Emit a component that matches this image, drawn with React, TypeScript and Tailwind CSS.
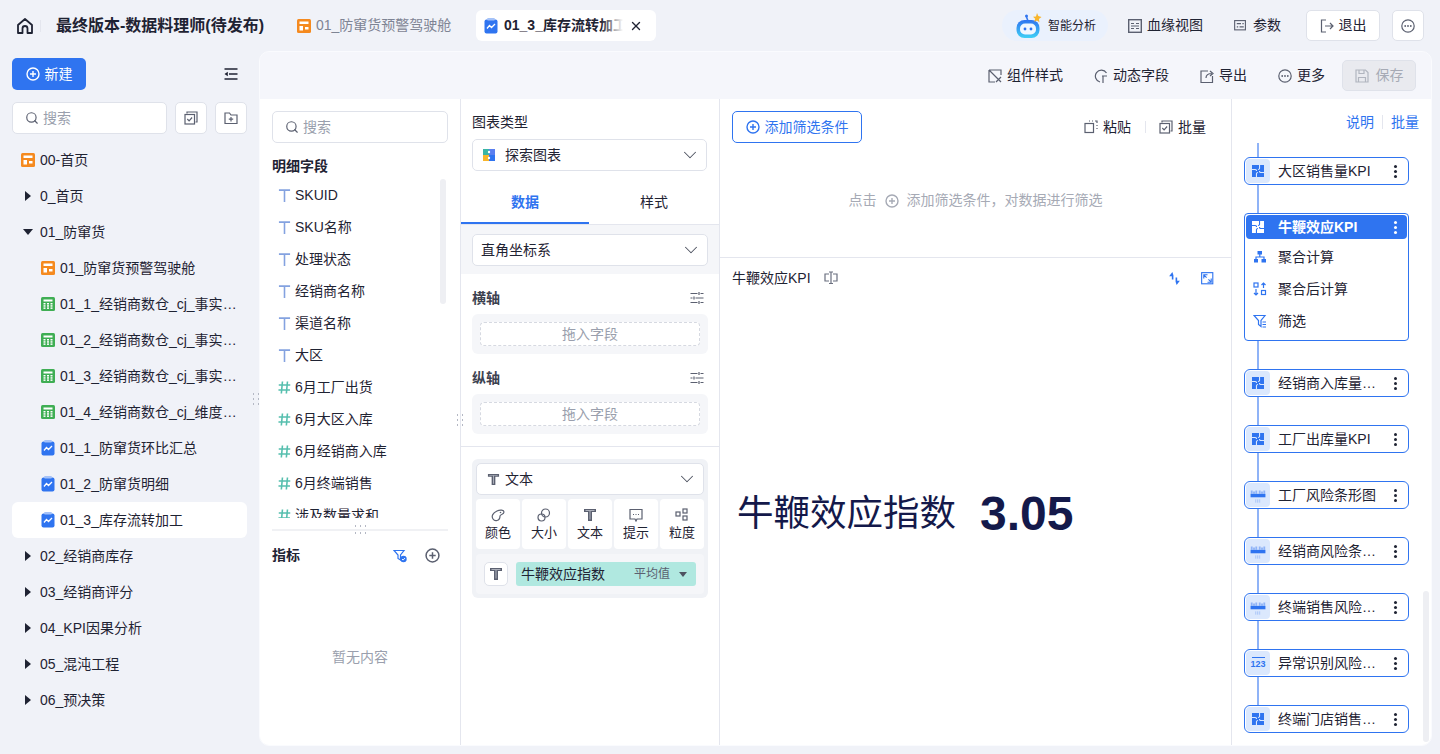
import React from "react";
import { ChevronDown, Search, X } from "lucide-react";

const BLUE = "#2f74f0";

function Svg({ size = 14, children, className = "" }: { size?: number; children: React.ReactNode; className?: string }) {
  return (
    <svg width={size} height={size} viewBox="0 0 14 14" fill="none" className={`shrink-0 ${className}`}>
      {children}
    </svg>
  );
}

const stroke = { stroke: "currentColor", strokeWidth: 1.2 };

function HomeIcon() {
  return (
    <svg width="18" height="18" viewBox="0 0 18 18" fill="none" className="text-[#1f2333]">
      <path d="M2 8 9 2l7 6v8h-4.500v-4.500a2.500 2.500 0 0 0-5 0V16H2z" stroke="currentColor" strokeWidth="1.8" strokeLinejoin="round" />
    </svg>
  );
}

function DashIcon({ size = 14 }: { size?: number }) {
  return (
    <Svg size={size}>
      <rect width="14" height="14" rx="1.500" fill="#f58a1f" />
      <rect x="2.500" y="2.500" width="9" height="2.500" fill="#fff" />
      <rect x="2.500" y="7" width="3.500" height="4.500" fill="#fff" />
      <rect x="8" y="8" width="3.500" height="2.500" fill="#fff" />
    </Svg>
  );
}

function TableIcon() {
  return (
    <Svg>
      <rect width="14" height="14" rx="1.500" fill="#3fae54" />
      <rect x="2.500" y="2.500" width="9" height="2" fill="#fff" />
      {[2.5, 6, 9.5].map((x) =>
        [6, 8.2, 10.4].map((y) => <rect key={`${x}-${y}`} x={x} y={y} width="2" height="1.500" fill="#fff" />)
      )}
    </Svg>
  );
}

function ReportIcon() {
  return (
    <svg width="14" height="16" viewBox="0 0 14 16" fill="none" className="shrink-0">
      <rect x="0.500" y="1.500" width="13" height="14" rx="2" fill={BLUE} />
      <rect x="3" y="0" width="8" height="2.500" rx="1.200" fill="#a5c2f8" />
      <path d="m3 10.500 2.500-3 2 2L11 6" stroke="#fff" strokeWidth="1.300" />
    </svg>
  );
}

function CheckBoxIcon() {
  return (
    <Svg className="text-[#5b6070]">
      <path d="M3 2.500V1h10v10h-1.500" {...stroke} />
      <rect x="1" y="3.500" width="9.500" height="9.500" {...stroke} />
      <path d="m3.300 8 1.800 1.900 3-3.400" {...stroke} />
    </Svg>
  );
}

function FolderPlusIcon() {
  return (
    <Svg className="text-[#5b6070]">
      <path d="M1 2h4.500l1.500 2h6v8.500H1z" {...stroke} />
      <path d="M7 6v4.500M4.800 8.200h4.400" {...stroke} />
    </Svg>
  );
}

function PlusCircle({ size = 14, className = "" }: { size?: number; className?: string }) {
  return (
    <Svg size={size} className={className}>
      <circle cx="7" cy="7" r="6" stroke="currentColor" strokeWidth="1.400" />
      <path d="M7 4v6M4 7h6" stroke="currentColor" strokeWidth="1.400" />
    </Svg>
  );
}

function TIcon() {
  return (
    <Svg size={13} className="text-[#84a2e0]">
      <path d="M1 1.200h12M7 1.200V14" stroke="currentColor" strokeWidth="1.700" />
    </Svg>
  );
}

function HashIcon() {
  return (
    <Svg size={13} className="text-[#56bfae]">
      <path d="M4.800 0.500 3.600 13.500M10.200 0.500 9 13.500M0.800 4.300h12.400M0.500 9.700h12.400" stroke="currentColor" strokeWidth="1.700" />
    </Svg>
  );
}

function BoldT({ size = 13 }: { size?: number }) {
  return (
    <Svg size={size}>
      <path d="M1 1h12v3H1zM5 3h4v10H5z" fill="#5b6070" />
      <path d="M2.500 2.300h9v0.700h-9zM6.600 3h0.800v8.500h-0.800z" fill="#c6c9d2" />
    </Svg>
  );
}

function SlidersIcon() {
  return (
    <Svg className="text-[#5b6070]">
      <path d="M0.500 2.500h7M10.500 2.500h3M0.500 7h2M5.500 7h8M0.500 11.500h7M10.500 11.500h3M9 1v3M4 5.500v3M9 10v3" {...stroke} />
    </Svg>
  );
}

function PuzzleIcon({ white = false }: { white?: boolean }) {
  const c = white ? "#fff" : BLUE;
  const bg = white ? BLUE : "#dbe8fd";
  return (
    <Svg size={12}>
      <rect width="14" height="14" fill={c} />
      <path
        d="M8.800 0v3.700a1.500 1.500 0 0 1-1.800 1.500M0 5.200h3.700a1.500 1.500 0 0 1 1.500 1.800M14 8.800h-3.700a1.500 1.500 0 0 1-1.500-1.800M5.200 14v-3.700a1.500 1.500 0 0 1 1.800-1.500"
        stroke={bg}
        strokeWidth="1.300"
      />
    </Svg>
  );
}

function BarTagIcon() {
  return (
    <Svg size={16}>
      <path d="M1.500 3v3M3.500 4v2M5.500 3v3M8.500 3v3M10.500 4v2M12.500 3v3" stroke="#8fb3f7" strokeWidth="1.600" />
      <rect x="0.500" y="6" width="13" height="3" fill={BLUE} />
      <path d="M4.500 11.500h5M4.500 13h5" stroke="#a5c2f8" strokeWidth="1" strokeDasharray="1 0.600" />
    </Svg>
  );
}

function NumberIcon() {
  return (
    <div className="flex flex-col items-center">
      <div className="h-px w-[13px] bg-[#2f74f0]" />
      <span className="mt-[2px] text-[9px] font-bold leading-[9px] text-[#2f74f0]">123</span>
    </div>
  );
}

function Kebab({ white = false }: { white?: boolean }) {
  const c = white ? "bg-white" : "bg-[#1f2333]";
  return (
    <div className="flex h-[13px] flex-col justify-between">
      <span className={`h-[3px] w-[3px] rounded-full ${c}`} />
      <span className={`h-[3px] w-[3px] rounded-full ${c}`} />
      <span className={`h-[3px] w-[3px] rounded-full ${c}`} />
    </div>
  );
}

function Grip({ className, wide = false }: { className: string; wide?: boolean }) {
  return (
    <div className={`absolute grid ${wide ? "grid-cols-3 gap-x-[4px] gap-y-[5px]" : "grid-cols-2 gap-x-[4px] gap-y-[3px]"} ${className}`}>
      {[0, 1, 2, 3, 4, 5].map((i) => (
        <span key={i} className="h-[2px] w-[1px] bg-[#b4b8c4]" />
      ))}
    </div>
  );
}

function RobotLogo() {
  return (
    <svg width="28" height="28" viewBox="0 0 28 28" fill="none" className="shrink-0">
      <defs>
        <linearGradient id="robotHead" x1="0" y1="0" x2="0" y2="1">
          <stop offset="0" stopColor="#2f74f0" />
          <stop offset="1" stopColor="#3fd0f5" />
        </linearGradient>
      </defs>
      <path d="M13 9 11.500 5" stroke="#2f74f0" strokeWidth="1.500" />
      <circle cx="11.500" cy="4" r="1.500" fill="#2f74f0" />
      <rect x="1.500" y="8" width="23" height="18" rx="8" fill="url(#robotHead)" />
      <rect x="5" y="11.500" width="16" height="11" rx="5" fill="#f0f7ff" />
      <circle cx="10" cy="17" r="1.400" fill="#2f74f0" />
      <circle cx="16" cy="17" r="1.400" fill="#2f74f0" />
      <path d="m22 1 1.300 3 3.200 1-2.600 2 .5 3.200-2.400-1.800-2.700 1.300.9-3L18 4.800l3-.2z" fill="#f8b52c" />
    </svg>
  );
}

function TopBar() {
  return (
    <div className="flex h-[51px] shrink-0 items-center pl-[16px] pr-[16px]">
      <HomeIcon />
      <div className="ml-[6px] h-[12px] w-px bg-[#e4e6ee]" />
      <div className="ml-[15px] w-[241px] shrink-0 text-[16px] font-bold text-[#1f2333]">最终版本-数据料理师(待发布)</div>
      <div className="flex w-[179px] shrink-0 items-center gap-[5px] text-[14px] text-[#7e8494]">
        <DashIcon />
        <span>01_防窜货预警驾驶舱</span>
      </div>
      <div className="flex h-[31px] w-[180px] shrink-0 items-center rounded-[6px] bg-white pl-[8px] text-[14px] font-bold text-[#1f2333]">
        <ReportIcon />
        <span className="relative ml-[6px] w-[119px] overflow-hidden whitespace-nowrap">
          01_3_库存流转加工
          <span className="absolute inset-y-0 right-0 w-[22px] bg-gradient-to-r from-transparent to-white" />
        </span>
        <X size={14} strokeWidth={2.4} className="ml-[6px] text-[#1f2333]" />
      </div>

      <div className="ml-auto flex items-center">
        <div className="flex h-[31px] w-[106px] items-center rounded-full bg-[#eaf1fd] pl-[13px] text-[12px] text-[#1f2333]">
          <RobotLogo />
          <span className="ml-[5px]">智能分析</span>
        </div>
        <div className="ml-[20px] flex items-center gap-[5px] text-[14px] text-[#1f2333]">
          <Svg className="text-[#5b6070]">
            <rect x="0.700" y="0.700" width="12.600" height="12.600" stroke="currentColor" strokeWidth="1.400" />
            <path d="M3 4.500h3M3 9.500h3M8 4.500h3M8 9.500h3M3 7h8" {...stroke} />
          </Svg>
          <span>血缘视图</span>
        </div>
        <div className="ml-[31px] flex items-center gap-[6px] text-[14px] text-[#1f2333]">
          <Svg size={13} className="text-[#5b6070]">
            <rect x="0.700" y="1.700" width="11.600" height="10" {...stroke} />
            <path d="M3 5h4.500M9 5h1.500M3 8.500h1.500M6 8.500h4.500" {...stroke} />
          </Svg>
          <span>参数</span>
        </div>
        <button className="ml-[25px] flex h-[31px] w-[74px] items-center justify-center gap-[5px] rounded-[5px] border border-[#dfe2ea] bg-white text-[14px] text-[#1f2333]">
          <Svg className="text-[#5b6070]">
            <path d="M6 1H1.500v12H6M5 7h8M10 4l3 3-3 3" {...stroke} />
          </Svg>
          退出
        </button>
        <button className="ml-[12px] flex h-[31px] w-[32px] items-center justify-center rounded-[5px] border border-[#dfe2ea] bg-white">
          <EllipsisCircle />
        </button>
      </div>
    </div>
  );
}

function EllipsisCircle() {
  return (
    <Svg className="text-[#5b6070]">
      <circle cx="7" cy="7" r="6.200" {...stroke} />
      <circle cx="4.200" cy="7" r="0.900" fill="currentColor" />
      <circle cx="7" cy="7" r="0.900" fill="currentColor" />
      <circle cx="9.800" cy="7" r="0.900" fill="currentColor" />
    </Svg>
  );
}

type TreeRow = { label: string; icon?: "dash" | "table" | "report"; caret?: "right" | "down"; indent?: boolean; active?: boolean };

const TREE: TreeRow[] = [
  { label: "00-首页", icon: "dash" },
  { label: "0_首页", caret: "right" },
  { label: "01_防窜货", caret: "down" },
  { label: "01_防窜货预警驾驶舱", icon: "dash", indent: true },
  { label: "01_1_经销商数仓_cj_事实表一二三", icon: "table", indent: true },
  { label: "01_2_经销商数仓_cj_事实表一二三", icon: "table", indent: true },
  { label: "01_3_经销商数仓_cj_事实表一二三", icon: "table", indent: true },
  { label: "01_4_经销商数仓_cj_维度表一二三", icon: "table", indent: true },
  { label: "01_1_防窜货环比汇总", icon: "report", indent: true },
  { label: "01_2_防窜货明细", icon: "report", indent: true },
  { label: "01_3_库存流转加工", icon: "report", indent: true, active: true },
  { label: "02_经销商库存", caret: "right" },
  { label: "03_经销商评分", caret: "right" },
  { label: "04_KPI因果分析", caret: "right" },
  { label: "05_混沌工程", caret: "right" },
  { label: "06_预决策", caret: "right" },
];

function Sidebar() {
  return (
    <aside className="relative w-[259px] shrink-0 pl-[12px] pr-[12px] pt-[7px]">
      <div className="flex items-center justify-between">
        <button className="flex h-[32px] w-[74px] items-center justify-center gap-[5px] rounded-[5px] bg-[#2f74f0] text-[14px] text-white">
          <PlusCircle />
          新建
        </button>
        <Svg className="mr-[9px] text-[#1f2333]">
          <path d="M0.500 2h13M5 7h8.500M0.500 12h13" stroke="currentColor" strokeWidth="1.500" />
          <path d="M3.800 4.800v4.400L0.500 7z" fill="currentColor" />
        </Svg>
      </div>
      <div className="mt-[12px] flex gap-[8px]">
        <div className="flex h-[32px] w-[155px] items-center gap-[4px] rounded-[5px] border border-[#dfe2ea] bg-white pl-[12px] text-[14px] text-[#9a9fad]">
          <Search size={14} className="text-[#5b6070]" />
          搜索
        </div>
        <div className="flex h-[32px] w-[32px] items-center justify-center rounded-[5px] border border-[#dfe2ea] bg-white">
          <CheckBoxIcon />
        </div>
        <div className="flex h-[32px] w-[32px] items-center justify-center rounded-[5px] border border-[#dfe2ea] bg-white">
          <FolderPlusIcon />
        </div>
      </div>
      <div className="mt-[8px]">
        {TREE.map((row) => (
          <div
            key={row.label}
            className={`flex h-[36px] items-center text-[14px] text-[#1f2333] ${row.active ? "rounded-[6px] bg-white" : ""} ${
              row.indent ? "pl-[29px]" : "pl-[9px]"
            }`}
          >
            {row.caret === "right" && <span className="ml-[4px] mr-[9px] h-0 w-0 border-y-[5px] border-l-[6px] border-y-transparent border-l-[#1f2333]" />}
            {row.caret === "down" && <span className="ml-[2px] mr-[7px] h-0 w-0 border-x-[5px] border-t-[6px] border-x-transparent border-t-[#1f2333]" />}
            {row.icon === "dash" && <DashIcon />}
            {row.icon === "table" && <TableIcon />}
            {row.icon === "report" && <ReportIcon />}
            <span className={`w-[178px] truncate ${row.icon ? "ml-[5px]" : ""}`}>{row.label}</span>
          </div>
        ))}
      </div>
      <Grip className="right-0 top-[342px]" />
    </aside>
  );
}

function Toolbar() {
  const item = "flex items-center gap-[5px] text-[14px] text-[#1f2333]";
  return (
    <div className="flex h-[47px] shrink-0 items-center justify-end gap-[31px] pr-[15px]">
      <div className={item}>
        <Svg className="text-[#5b6070]">
          <path d="M1 1h12v5M1 1v12h6M1 1l12 12M8 13l5-5" {...stroke} />
        </Svg>
        组件样式
      </div>
      <div className={item}>
        <Svg className="text-[#5b6070]">
          <path d="M12.500 4A6 6 0 1 0 6 13M8 7h5M9 7v7" {...stroke} />
        </Svg>
        动态字段
      </div>
      <div className={item}>
        <Svg className="text-[#5b6070]">
          <path d="M8 2H1v11.500h11.500V7M6 9c0-3 2-4.500 6-4.500M10 2l3 2.500-3 2.500" {...stroke} />
        </Svg>
        导出
      </div>
      <div className={item}>
        <EllipsisCircle />
        更多
      </div>
      <button className="-ml-[14px] flex h-[31px] w-[74px] items-center justify-center gap-[7px] rounded-[5px] border border-[#dfe2ea] bg-[#e9eaef] text-[14px] text-[#a6aab5]">
        <Svg className="text-[#b1b5bf]">
          <path d="M1 1h9.500L13 3.500V13H1zM4 1v3.500h5V1M3.500 13V8.500h7V13" {...stroke} />
        </Svg>
        保存
      </button>
    </div>
  );
}

const FIELDS_TEXT = ["SKUID", "SKU名称", "处理状态", "经销商名称", "渠道名称", "大区"];
const FIELDS_NUM = ["6月工厂出货", "6月大区入库", "6月经销商入库", "6月终端销售", "涉及数量求和"];

function FieldColumn() {
  return (
    <div className="relative flex w-[201px] shrink-0 flex-col border-r border-[#e4e6ee]">
      <div className="px-[12px] pt-[12px]">
        <div className="flex h-[32px] items-center gap-[4px] rounded-[5px] border border-[#dfe2ea] pl-[12px] text-[14px] text-[#9a9fad]">
          <Search size={14} className="text-[#5b6070]" />
          搜索
        </div>
      </div>
      <div className="relative mb-[11px] h-[375px] overflow-hidden">
        <div className="px-[12px] pt-[14px] text-[14px] font-bold leading-[18px] text-[#1f2333]">明细字段</div>
        <div className="mt-[4px] pl-[18px]">
          {FIELDS_TEXT.map((f) => (
            <div key={f} className="flex h-[32px] items-center gap-[4px] text-[14px] text-[#1f2333]">
              <TIcon />
              {f}
            </div>
          ))}
          {FIELDS_NUM.map((f) => (
            <div key={f} className="flex h-[32px] items-center gap-[4px] text-[14px] text-[#1f2333]">
              <HashIcon />
              {f}
            </div>
          ))}
        </div>
        <div className="absolute left-[180px] top-[36px] h-[125px] w-[6px] rounded-full bg-[#eeeff3]" />
      </div>
      <div className="mx-[12px] h-[2px] bg-[#f0f1f4]" />
      <div className="flex items-center justify-between px-[12px] pr-[20px] pt-[14px]">
        <span className="text-[14px] font-bold text-[#1f2333]">指标</span>
        <div className="flex items-center gap-[18px]">
          <Svg className="text-[#2f74f0]">
            <path d="M1 1.500h10L7.500 6v5L5 9.500V6z" {...stroke} />
            <circle cx="10.500" cy="10" r="3.200" fill="currentColor" />
            <path d="m9 10 1.100 1.100L12 9" stroke="#fff" strokeWidth="0.900" />
          </Svg>
          <PlusCircle size={15} className="text-[#5b6070]" />
        </div>
      </div>
      <div className="mt-[81px] text-center text-[14px] text-[#9a9fad]">暂无内容</div>
      <Grip wide className="left-[95px] top-[426px]" />
    </div>
  );
}

function Select({ children, className = "" }: { children: React.ReactNode; className?: string }) {
  return (
    <div className={`flex h-[32px] items-center justify-between rounded-[5px] border border-[#dfe2ea] bg-white pr-[5px] text-[14px] text-[#1f2333] ${className}`}>
      <div className="flex items-center">{children}</div>
      <ChevronDown size={22} strokeWidth={1.100} className="text-[#4d5260]" />
    </div>
  );
}

function AxisBlock({ title }: { title: string }) {
  return (
    <div className="px-[11px]">
      <div className="flex h-[16px] items-center justify-between pr-[4px] text-[14px] font-bold text-[#3d4250]">
        {title}
        <SlidersIcon />
      </div>
      <div className="mt-[8px] h-[40px] rounded-[6px] bg-[#f5f6f9] p-[8px]">
        <div className="flex h-[24px] items-center justify-center rounded-[4px] border border-dashed border-[#d6d9e1] bg-white text-[14px] text-[#9a9fad]">
          拖入字段
        </div>
      </div>
    </div>
  );
}

function Tile({ label, icon }: { label: string; icon: React.ReactNode }) {
  return (
    <div className="flex h-[50px] w-[44px] flex-col items-center justify-center gap-[4px] rounded-[4px] bg-white text-[13px] leading-[14px] text-[#1f2333]">
      {icon}
      {label}
    </div>
  );
}

function ConfigColumn() {
  return (
    <div className="relative flex w-[259px] shrink-0 flex-col border-r border-[#e4e6ee]">
      <div className="px-[11px] pb-[7px] pt-[14px]">
        <div className="text-[14px] leading-[18px] text-[#1f2333]">图表类型</div>
        <Select className="mt-[8px] w-[235px] pl-[10px]">
          <svg width="12" height="12" viewBox="0 0 12 12" className="shrink-0">
            <rect width="6" height="6" fill="#3ab5a5" />
            <rect x="6" width="6" height="6" fill="#5a7ff0" />
            <rect y="6" width="6" height="6" fill="#f8b52c" />
            <rect x="6" y="6" width="6" height="6" fill="#2f74f0" />
            <circle cx="6" cy="3" r="1.200" fill="#fff" />
            <circle cx="6" cy="9" r="1.200" fill="#fff" />
          </svg>
          <span className="ml-[10px]">探索图表</span>
        </Select>
      </div>
      <div className="flex h-[47px] shrink-0 border-b border-[#e4e6ee] text-[14px]">
        <div className="flex w-[128px] items-center justify-center border-b-2 border-[#2f74f0] pt-[4px] font-bold text-[#2f74f0]">数据</div>
        <div className="flex flex-1 items-center justify-center pt-[2px] text-[#1f2333]">样式</div>
      </div>
      <div className="h-[49px] bg-[#f5f6f9] px-[11px] pt-[9px]">
        <Select className="w-[236px] pl-[8px]">直角坐标系</Select>
      </div>
      <div className="flex flex-col gap-[16px] pt-[16px]">
        <AxisBlock title="横轴" />
        <AxisBlock title="纵轴" />
      </div>
      <div className="mt-[12px] h-px bg-[#e4e6ee]" />
      <div className="mx-[11px] mt-[12px] w-[236px] rounded-[6px] bg-[#f0f2f6] p-[4px]">
        <Select className="pl-[10px]">
          <BoldT />
          <span className="ml-[5px]">文本</span>
        </Select>
        <div className="mt-[4px] flex justify-between">
          <Tile
            label="颜色"
            icon={
              <Svg className="text-[#5b6070]">
                <path d="M2 11c-2-3 0-6 4-8 3-1.500 7-1 7 1 0 3-4 2-4 4s-1 4-3 4.500S3 12.500 2 11z" {...stroke} />
                <circle cx="9.500" cy="4.500" r="0.800" fill="currentColor" />
              </Svg>
            }
          />
          <Tile
            label="大小"
            icon={
              <Svg className="text-[#5b6070]">
                <circle cx="8.500" cy="5" r="4" {...stroke} />
                <circle cx="4.500" cy="9.500" r="3.500" {...stroke} />
              </Svg>
            }
          />
          <Tile label="文本" icon={<BoldT size={14} />} />
          <Tile
            label="提示"
            icon={
              <Svg className="text-[#5b6070]">
                <path d="M1 1.500h12V11H8l-1 2-1-2H1z" {...stroke} />
                <path d="M4 6.500h1M6.500 6.500h1M9 6.500h1" {...stroke} />
              </Svg>
            }
          />
          <Tile
            label="粒度"
            icon={
              <Svg className="text-[#5b6070]">
                <rect x="1" y="4" width="4" height="4" {...stroke} />
                <rect x="8" y="1" width="4" height="4" {...stroke} />
                <rect x="8" y="8" width="4" height="4" {...stroke} />
              </Svg>
            }
          />
        </div>
        <div className="mt-[5px] flex h-[40px] items-center rounded-[4px] bg-[#f5f6f9] pl-[8px] pr-[8px]">
          <div className="flex h-[24px] w-[24px] items-center justify-center rounded-[5px] border border-[#dfe2ea] bg-white">
            <BoldT size={14} />
          </div>
          <div className="ml-[8px] flex h-[24px] flex-1 items-center rounded-[3px] bg-[#b0e8e0] pl-[5px] pr-[9px] text-[14px] text-[#1f2333]">
            牛鞭效应指数
            <span className="ml-auto text-[12px] text-[#5b6070]">平均值</span>
            <span className="ml-[9px] h-0 w-0 border-x-[4px] border-t-[5px] border-x-transparent border-t-[#4d5260]" />
          </div>
        </div>
      </div>
      <Grip className="-left-[4px] top-[315px]" />
    </div>
  );
}

function CanvasColumn() {
  return (
    <div className="flex w-[512px] shrink-0 flex-col border-r border-[#e4e6ee]">
      <div className="h-[159px] shrink-0 border-b border-[#e4e6ee] px-[12px] pt-[12px]">
        <div className="flex items-center justify-between">
          <button className="flex h-[32px] w-[130px] items-center justify-center gap-[5px] rounded-[5px] border border-[#2f74f0] text-[14px] text-[#2f74f0]">
            <PlusCircle />
            添加筛选条件
          </button>
          <div className="mr-[13px] flex items-center text-[14px] text-[#1f2333]">
            <Svg className="text-[#5b6070]">
              <rect x="1" y="3.500" width="8.500" height="9" {...stroke} />
              <path d="M5 1h1M8 1h1M11 1h2v2M13 5v1M13 8v1" {...stroke} />
            </Svg>
            <span className="ml-[5px]">粘贴</span>
            <div className="ml-[14px] mr-[13px] h-[12px] w-px bg-[#e4e6ee]" />
            <CheckBoxIcon />
            <span className="ml-[5px]">批量</span>
          </div>
        </div>
        <div className="mt-[47px] flex items-center justify-center gap-[8px] text-[14px] text-[#a6aab5]">
          点击
          <PlusCircle size={14} className="text-[#a6aab5]" />
          添加筛选条件，对数据进行筛选
        </div>
      </div>
      <div className="flex h-[40px] shrink-0 items-center justify-between px-[12px] pr-[17px]">
        <div className="flex items-center gap-[13px] text-[14px] text-[#1f2333]">
          牛鞭效应KPI
          <Svg className="text-[#6b7080]">
            <path d="M5 3H1v7h4M9 3h4v7H9M5 1h4M7 1v11.500M5 12.500h4" {...stroke} />
          </Svg>
        </div>
        <div className="flex items-center gap-[19px]">
          <Svg size={15} className="text-[#2f74f0]">
            <path d="M5 1 2 5h2.500v3H6V4zM9 13l3-4H9.500V6H8v4z" fill="currentColor" />
          </Svg>
          <Svg size={13} className="text-[#2f74f0]">
            <rect x="0.700" y="0.700" width="12" height="12" {...stroke} />
            <path d="M3 7V3h4M7 11h4V7M3 3l3 3M11 11 8 8" {...stroke} />
          </Svg>
        </div>
      </div>
      <div className="flex items-center pl-[17px] pt-[189px] text-[#14194a]">
        <span className="text-[36.5px] leading-[54px]">牛鞭效应指数</span>
        <span className="ml-[24px] text-[48px] font-bold leading-[54px]">3.05</span>
      </div>
    </div>
  );
}

type NodeRow = { label: string; icon: "puzzle" | "bar" | "num" };

const NODES_AFTER: NodeRow[] = [
  { label: "经销商入库量KPI指标", icon: "puzzle" },
  { label: "工厂出库量KPI", icon: "puzzle" },
  { label: "工厂风险条形图", icon: "bar" },
  { label: "经销商风险条形图表", icon: "bar" },
  { label: "终端销售风险条形图", icon: "bar" },
  { label: "异常识别风险明细表", icon: "num" },
  { label: "终端门店销售风险表", icon: "puzzle" },
];

function Connector({ h = 28 }: { h?: number }) {
  return <div className="ml-[13px] w-[2px] bg-[#8fb3f7]" style={{ height: h }} />;
}

function NodeCard({ row }: { row: NodeRow }) {
  return (
    <div className="flex h-[28px] w-[165px] items-center rounded-[6px] border border-[#2f74f0] bg-white pl-[1px] pr-[11px]">
      <div className="flex h-[24px] w-[24px] shrink-0 items-center justify-center rounded-[4px] bg-[#dbe8fd]">
        {row.icon === "puzzle" && <PuzzleIcon />}
        {row.icon === "bar" && <BarTagIcon />}
        {row.icon === "num" && <NumberIcon />}
      </div>
      <span className="ml-[8px] w-[98px] truncate text-[14px] text-[#1f2333]">{row.label}</span>
      <div className="ml-auto">
        <Kebab />
      </div>
    </div>
  );
}

function SubRow({ label, icon }: { label: string; icon: React.ReactNode }) {
  return (
    <div className="flex h-[32px] items-center pl-[7px] text-[14px] text-[#1f2333]">
      <span className="flex w-[14px] justify-center text-[#2f74f0]">{icon}</span>
      <span className="ml-[11px]">{label}</span>
    </div>
  );
}

function NodeColumn() {
  return (
    <div className="relative flex-1 overflow-hidden pl-[12px]">
      <div className="flex h-[44px] items-center justify-end pr-[12px] pt-[2px] text-[14px] text-[#2f74f0]">
        说明
        <span className="mx-[8px] h-[14px] w-px bg-[#e4e6ee]" />
        批量
      </div>
      <Connector h={14} />
      <NodeCard row={{ label: "大区销售量KPI", icon: "puzzle" }} />
      <Connector />
      <div className="w-[165px] rounded-[4px] border border-[#2f74f0] bg-white p-[1px] pb-[3px]">
        <div className="mb-[2px] flex h-[24px] items-center rounded-[4px] bg-[#2f74f0] pl-[6px] pr-[10px] text-[14px] font-bold text-white">
          <PuzzleIcon white />
          <span className="ml-[14px]">牛鞭效应KPI</span>
          <div className="ml-auto">
            <Kebab white />
          </div>
        </div>
        <SubRow
          label="聚合计算"
          icon={
            <Svg size={14}>
              <path d="M4.500 1h4.500v3.500H4.500zM1 9h4v3.500H1zM8.500 9h4.500v3.500H8.500z" fill="currentColor" />
              <path d="M6.800 4v3M3 9V7h8v2" {...stroke} />
            </Svg>
          }
        />
        <SubRow
          label="聚合后计算"
          icon={
            <Svg size={14}>
              <rect x="1" y="1" width="4" height="4" {...stroke} />
              <rect x="8.500" y="8.500" width="4" height="4" {...stroke} />
              <path d="M10.500 6V1M8.500 3l2-2 2 2M3 7v6M1 11l2 2 2-2" {...stroke} />
            </Svg>
          }
        />
        <SubRow
          label="筛选"
          icon={
            <Svg size={14}>
              <path d="M1 1.500h11L8 6.500v6l-2.500-2v-4z" {...stroke} />
              <path d="M9.500 8H13M9.500 10.500H13M9.500 13H13" {...stroke} />
            </Svg>
          }
        />
      </div>
      {NODES_AFTER.map((row) => (
        <React.Fragment key={row.label}>
          <Connector />
          <NodeCard row={row} />
        </React.Fragment>
      ))}
      <div className="absolute left-[191px] top-[492px] h-[151px] w-[6px] rounded-full bg-[#eeeff3]" />
    </div>
  );
}

export default function App() {
  return (
    <div
      className="flex h-screen flex-col overflow-hidden bg-[#f0f2f8]"
      style={{ fontFamily: '"Liberation Sans", "Noto Sans CJK SC", sans-serif' }}
    >
      <TopBar />
      <div className="flex min-h-0 flex-1">
        <Sidebar />
        <main className="mb-[8px] mr-[8px] flex min-w-0 flex-1 flex-col overflow-hidden rounded-[10px] border border-[#fafbfe] bg-[#f5f6fb]">
          <Toolbar />
          <div className="flex min-h-0 flex-1 bg-white">
            <FieldColumn />
            <ConfigColumn />
            <CanvasColumn />
            <NodeColumn />
          </div>
        </main>
      </div>
    </div>
  );
}
